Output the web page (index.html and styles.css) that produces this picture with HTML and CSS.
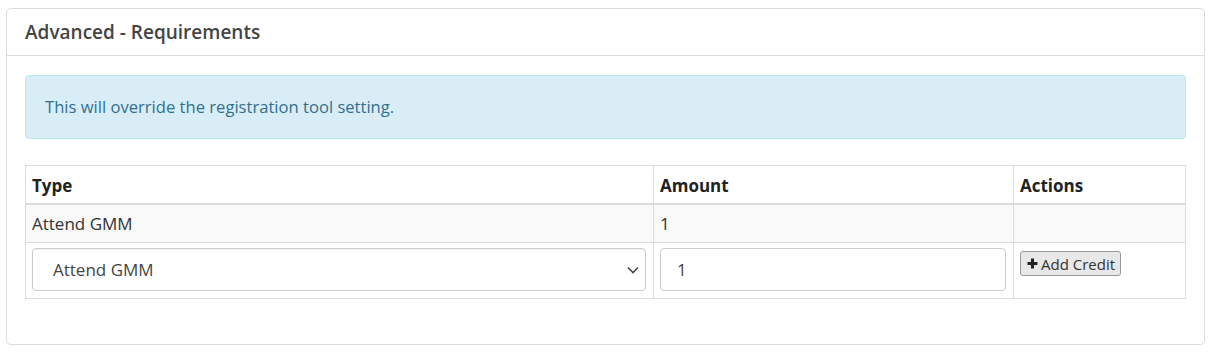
FILE: index.html
```html
<!DOCTYPE html>
<html lang="en">
<head>
<meta charset="utf-8">
<title>Advanced - Requirements</title>
<link rel="stylesheet" href="styles.css">
</head>
<body>
<div class="panel">
  <div class="panel-heading">
    <h3 class="panel-title">Advanced - Requirements</h3>
  </div>
  <div class="panel-body">
    <div class="alert">This will override the registration tool setting.</div>
    <table class="req-table">
      <colgroup>
        <col class="col-type">
        <col class="col-amount">
        <col class="col-actions">
      </colgroup>
      <thead>
        <tr><th>Type</th><th>Amount</th><th>Actions</th></tr>
      </thead>
      <tbody>
        <tr class="row-data"><td>Attend GMM</td><td>1</td><td></td></tr>
        <tr class="row-form">
          <td>
            <div class="select">
              <span class="select-value">Attend GMM</span>
              <svg class="chevron" width="12" height="8" viewBox="0 0 12 8"><path d="M1 1.5 L6 6.5 L11 1.5" fill="none" stroke="#444" stroke-width="1.6"/></svg>
            </div>
          </td>
          <td><div class="input">1</div></td>
          <td>
            <button class="btn-add" type="button">
              <svg class="plus" width="11" height="11" viewBox="0 0 10 10"><path d="M3.6 0.5h2.8v3.1h3.1v2.8h-3.1v3.1h-2.8v-3.1h-3.1v-2.8h3.1z" fill="#222"/></svg>
              <span>Add Credit</span>
            </button>
          </td>
        </tr>
      </tbody>
    </table>
  </div>
</div>
</body>
</html>
```

FILE: styles.css
```css
html, body {
  margin: 0;
  padding: 0;
  background: #fff;
}
body {
  padding: 8px 8px 0 6px;
  font-family: "Open Sans", "Noto Sans", sans-serif;
  color: #333;
  font-size: 17px;
}
.panel {
  border: 1px solid #dcdcdc;
  border-radius: 5px;
  height: 337px;
  box-sizing: border-box;
  box-shadow: 0 1px 1px rgba(0,0,0,0.04);
}
.panel-heading {
  height: 47px;
  box-sizing: border-box;
  border-bottom: 1px solid #dcdcdc;
  padding: 0 18px;
  display: flex;
  align-items: center;
}
.panel-title {
  margin: 0;
  font-size: 19px;
  font-weight: 600;
  color: #444;
}
.panel-body {
  padding: 19px 18px 0 18px;
}
.alert {
  background: #d9edf7;
  border: 1px solid #bce8f1;
  border-radius: 4px;
  color: #31708f;
  padding: 20px 19px;
  line-height: 22px;
  font-size: 16.6px;
  margin-bottom: 26px;
}
.req-table {
  width: 100%;
  border-collapse: collapse;
  border: 1px solid #ddd;
}
.col-type { width: 628px; }
.col-amount { width: 360px; }
.col-actions { width: 172px; }
.req-table th, .req-table td {
  border: 1px solid #ddd;
  text-align: left;
  vertical-align: top;
}
.req-table th {
  font-weight: 700;
  color: #222;
  padding: 9px 6px 6px;
  line-height: 22px;
  border-bottom: 2px solid #ddd;
}
.row-data td {
  background: #f9f9f9;
  padding: 7px 6px;
  line-height: 23px;
}
.row-form td {
  padding: 5px 7px 7px 6px;
}
.select {
  height: 43px;
  box-sizing: border-box;
  border: 1px solid #ccc;
  border-radius: 4px;
  display: flex;
  align-items: center;
  justify-content: space-between;
  padding: 0 6px 0 20px;
  box-shadow: inset 0 1px 1px rgba(0,0,0,0.05);
  background: #fff;
}
.select-value {
  color: #444;
}
.input {
  height: 43px;
  box-sizing: border-box;
  border: 1px solid #ccc;
  border-radius: 4px;
  display: flex;
  align-items: center;
  padding: 0 16px;
  color: #444;
  background: #fff;
}
.btn-add {
  margin-top: 3px;
  display: inline-flex;
  align-items: center;
  gap: 3px;
  height: 25px;
  padding: 0 5px 0 6px;
  border: 1px solid #999;
  border-radius: 3px;
  background: #e8e8e8;
  font-family: inherit;
  font-size: 15px;
  color: #333;
}
```
